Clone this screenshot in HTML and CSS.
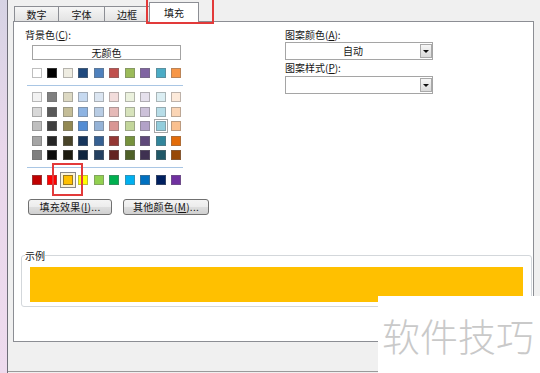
FILE: index.html
```html
<!DOCTYPE html>
<html lang="zh-CN">
<head>
<meta charset="utf-8">
<title>设置单元格格式 - 填充</title>
<link rel="stylesheet" href="styles.css">
</head>
<body>
<div class="screen">
  <div class="strip"></div>
  <div class="dialog">
    <div class="tabs">
      <div class="tab t1">数字</div>
      <div class="tab t2">字体</div>
      <div class="tab t3">边框</div>
      <div class="tab active">填充</div>
    </div>
    <div class="panel">
      <div class="cols">
        <div class="left">
          <div class="label">背景色(<u>C</u>):</div>
          <div class="none-btn">无颜色</div>
          <div class="swatches row-main">
            <span class="sw" style="background:#ffffff"></span>
            <span class="sw" style="background:#000000"></span>
            <span class="sw" style="background:#eeece1"></span>
            <span class="sw" style="background:#1f497d"></span>
            <span class="sw" style="background:#4f81bd"></span>
            <span class="sw" style="background:#c0504d"></span>
            <span class="sw" style="background:#9bbb59"></span>
            <span class="sw" style="background:#8064a2"></span>
            <span class="sw" style="background:#4bacc6"></span>
            <span class="sw" style="background:#f79646"></span>
          </div>
          <div class="sep"></div>
          <div class="swatches tints">
            <span class="sw" style="background:#f2f2f2"></span>
            <span class="sw" style="background:#7f7f7f"></span>
            <span class="sw" style="background:#ddd9c3"></span>
            <span class="sw" style="background:#c6d9f0"></span>
            <span class="sw" style="background:#dbe5f1"></span>
            <span class="sw" style="background:#f2dcdb"></span>
            <span class="sw" style="background:#ebf1dd"></span>
            <span class="sw" style="background:#e5e0ec"></span>
            <span class="sw" style="background:#dbeef3"></span>
            <span class="sw" style="background:#fdeada"></span>

            <span class="sw" style="background:#d8d8d8"></span>
            <span class="sw" style="background:#595959"></span>
            <span class="sw" style="background:#c4bd97"></span>
            <span class="sw" style="background:#8db3e2"></span>
            <span class="sw" style="background:#b8cce4"></span>
            <span class="sw" style="background:#e5b9b7"></span>
            <span class="sw" style="background:#d7e3bc"></span>
            <span class="sw" style="background:#ccc1d9"></span>
            <span class="sw" style="background:#b7dde8"></span>
            <span class="sw" style="background:#fbd5b5"></span>

            <span class="sw" style="background:#bfbfbf"></span>
            <span class="sw" style="background:#3f3f3f"></span>
            <span class="sw" style="background:#938953"></span>
            <span class="sw" style="background:#548dd4"></span>
            <span class="sw" style="background:#95b3d7"></span>
            <span class="sw" style="background:#d99694"></span>
            <span class="sw" style="background:#c3d69b"></span>
            <span class="sw" style="background:#b2a2c7"></span>
            <span class="sw hov" style="background:#92cddc"></span>
            <span class="sw" style="background:#fac08f"></span>

            <span class="sw" style="background:#a5a5a5"></span>
            <span class="sw" style="background:#262626"></span>
            <span class="sw" style="background:#494429"></span>
            <span class="sw" style="background:#17365d"></span>
            <span class="sw" style="background:#366092"></span>
            <span class="sw" style="background:#953734"></span>
            <span class="sw" style="background:#76923c"></span>
            <span class="sw" style="background:#5f497a"></span>
            <span class="sw" style="background:#31859b"></span>
            <span class="sw" style="background:#e36c09"></span>

            <span class="sw" style="background:#7f7f7f"></span>
            <span class="sw" style="background:#0c0c0c"></span>
            <span class="sw" style="background:#1d1b10"></span>
            <span class="sw" style="background:#0f243e"></span>
            <span class="sw" style="background:#244061"></span>
            <span class="sw" style="background:#632423"></span>
            <span class="sw" style="background:#4f6128"></span>
            <span class="sw" style="background:#3f3151"></span>
            <span class="sw" style="background:#205867"></span>
            <span class="sw" style="background:#974806"></span>
          </div>
          <div class="sep sep2"></div>
          <div class="swatches std">
            <span class="sw" style="background:#c00000"></span>
            <span class="sw" style="background:#ff0000"></span>
            <span class="sw sel" style="background:#ffc000"></span>
            <span class="sw" style="background:#ffff00"></span>
            <span class="sw" style="background:#92d050"></span>
            <span class="sw" style="background:#00b050"></span>
            <span class="sw" style="background:#00b0f0"></span>
            <span class="sw" style="background:#0070c0"></span>
            <span class="sw" style="background:#002060"></span>
            <span class="sw" style="background:#7030a0"></span>
          </div>
          <div class="btns">
            <button class="btn b1">填充效果(<u>I</u>)...</button>
            <button class="btn b2">其他颜色(<u>M</u>)...</button>
          </div>
        </div>
        <div class="right">
          <div class="label">图案颜色(<u>A</u>):</div>
          <div class="combo"><span class="combo-text">自动</span><span class="drop"></span></div>
          <div class="label second">图案样式(<u>P</u>):</div>
          <div class="combo combo2"><span class="combo-text"></span><span class="drop"></span></div>
        </div>
      </div>
      <fieldset class="sample">
        <legend>示例</legend>
        <div class="sample-fill"></div>
      </fieldset>
    </div>
  </div>
  <div class="mark mark-tab"></div>
  <div class="mark mark-swatch"></div>
  <div class="watermark">软件技巧</div>
</div>
</body>
</html>
```

FILE: styles.css
```css
* { box-sizing: border-box; }
html, body { margin: 0; padding: 0; }
body {
  width: 540px;
  height: 373px;
  overflow: hidden;
  font-family: "Noto Sans CJK SC", "Noto Sans", sans-serif;
  font-size: 10px;
  color: #151515;
  background: #f0f0f0;
}
u { text-decoration: underline; text-underline-offset: 1px; }

.screen {
  position: relative;
  display: flex;
  width: 540px;
  height: 373px;
}
.strip {
  width: 8px;
  flex: none;
  background: linear-gradient(#d6d3e4, #e9d7eb 40%, #eedbee);
  border-right: 1px solid #6e6e78;
}
.dialog {
  flex: 1;
  height: 372px;
  background: #f0f0f0;
  border-bottom: 1px solid #9a9a9a;
  padding: 0 6px 0 5px;
  display: flex;
  flex-direction: column;
}

/* tabs */
.tabs {
  height: 21px;
  display: flex;
  align-items: flex-end;
  padding-left: 1px;
}
.tab {
  height: 15px;
  border: 1px solid #8c8e94;
  border-bottom: none;
  border-right: none;
  background: linear-gradient(#f6f6f6, #e3e3e3);
  display: flex;
  align-items: center;
  justify-content: center;
  line-height: 12px;
  padding-top: 1px;
}
.t1 { width: 44px; }
.t2 { width: 46px; }
.t3 { width: 45px; }
.tab.active {
  width: 50px;
  height: 20px;
  margin-bottom: -1px;
  background: #fff;
  border-right: 1px solid #8c8e94;
  position: relative;
  z-index: 1;
  padding-top: 0;
}

/* panel */
.panel {
  height: 321px;
  background: #fff;
  border: 1px solid #8c8e94;
}
.cols {
  display: flex;
  padding: 7px 0 0 11px;
}
.left { width: 260px; flex: none; }
.right { width: 148px; flex: none; }

.label {
  line-height: 12px;
  height: 12px;
  white-space: nowrap;
}
.none-btn {
  margin: 4px 0 0 7px;
  width: 149px;
  height: 15px;
  border: 1px solid #a3a3a3;
  text-align: center;
  line-height: 13px;
}

.swatches {
  display: grid;
  grid-template-columns: repeat(10, 10px);
  column-gap: 5.44px;
  margin-left: 7px;
}
.row-main { margin-top: 8px; }
.tints { margin-top: 6px; row-gap: 4.6px; }
.std { margin-top: 7px; }
.sw {
  display: block;
  width: 10px;
  height: 10px;
  border: 1px solid rgba(110, 110, 110, 0.45);
}
.sw.hov {
  outline: 1px solid #a6a6a6;
  outline-offset: 1px;
}
.sw.sel {
  border-color: #9a7a20;
  outline: 1px solid #8a8a8a;
  outline-offset: 2px;
  box-shadow: 0 0 0 2px #fbf3d8;
}
.sep {
  margin: 7px 0 0 2px;
  width: 156px;
  height: 1px;
  background: #a9c6e4;
}
.sep2 { margin-top: 6.6px; }

.btns {
  display: flex;
  gap: 11px;
  margin: 14px 0 0 3px;
}
.btn {
  height: 16px;
  padding: 0;
  border: 1px solid #707070;
  border-radius: 3px;
  background: linear-gradient(#f4f4f4 0%, #ececec 50%, #dedede 51%, #d0d0d0 100%);
  font: inherit;
  color: inherit;
  line-height: 13px;
  letter-spacing: 0.3px;
}
.b1 { width: 84px; }
.b2 { width: 86px; }

/* right column */
.combo {
  margin-top: 1px;
  height: 18px;
  border: 1px solid #a5a5a5;
  display: flex;
  background: #fff;
}
.combo2 { margin-top: 2px; }
.label.second { margin-top: 2px; }
.combo-text {
  flex: 1;
  text-align: center;
  line-height: 16px;
}
.drop {
  width: 12px;
  margin: 1px 0;
  border: 1px solid #a9a9a9;
  background: linear-gradient(#f6f6f6, #dadada);
  display: flex;
  align-items: center;
  justify-content: center;
}
.drop::after {
  content: "";
  border-left: 3px solid transparent;
  border-right: 3px solid transparent;
  border-top: 3px solid #111;
}

/* sample */
.sample {
  margin: 34px 0 0 7px;
  width: 511px;
  padding: 0 8px 4px 3px;
  border: 1px solid #d3d7db;
  border-radius: 3px;
}
.sample legend {
  padding: 0;
  line-height: 14px;
}
.sample-fill {
  margin: 4px 0 0 5px;
  width: 493px;
  height: 35px;
  background: #ffc000;
}

/* overlays */
.mark {
  position: absolute;
  border: 2px solid #e23a3a;
}
.mark-tab { left: 146px; top: -2px; width: 68px; height: 26px; }
.mark-swatch { left: 52px; top: 163px; width: 31px; height: 33px; }

.watermark {
  position: absolute;
  left: 378px;
  top: 296px;
  right: 0;
  bottom: 0;
  background: #fff;
  color: #c9c9c9;
  font-size: 38px;
  line-height: 38px;
  font-weight: 300;
  padding: 20px 0 0 4px;
  white-space: nowrap;
}
```
